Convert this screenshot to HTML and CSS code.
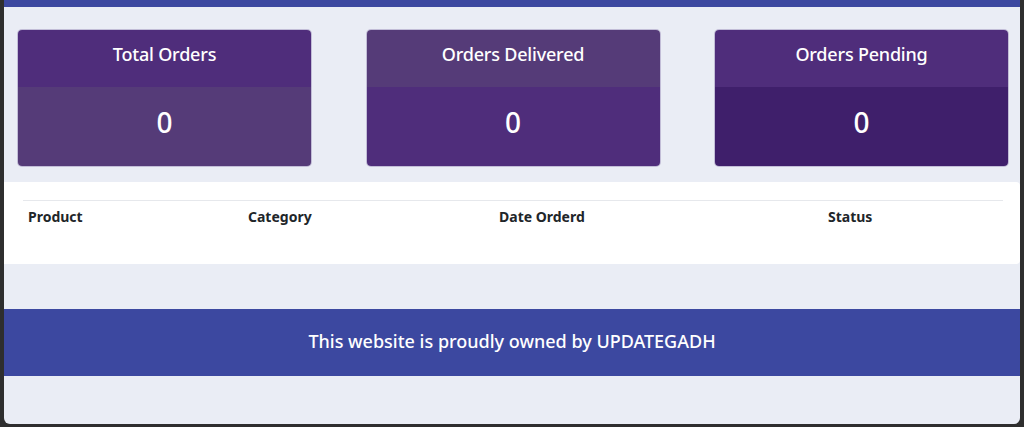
FILE: index.html
```html
<!DOCTYPE html>
<html lang="en">
<head>
    <meta charset="UTF-8">
    <meta name="viewport" content="width=device-width, initial-scale=1.0">
    <title>My Orders</title>
    <link rel="stylesheet" href="styles.css">
</head>
<body>
    <div class="page">
        <div class="navbar"></div>

        <!-- Resumen de pedidos -->
        <div class="cards">
            <div class="card card-total">
                <div class="card-header">Total Orders</div>
                <div class="card-body">0</div>
            </div>
            <div class="card card-delivered">
                <div class="card-header">Orders Delivered</div>
                <div class="card-body">0</div>
            </div>
            <div class="card card-pending">
                <div class="card-header">Orders Pending</div>
                <div class="card-body">0</div>
            </div>
        </div>

        <!-- Tabla de pedidos -->
        <div class="orders">
            <table class="orders-table">
                <thead>
                    <tr>
                        <th class="col-product">Product</th>
                        <th class="col-category">Category</th>
                        <th class="col-date">Date Orderd</th>
                        <th class="col-status">Status</th>
                    </tr>
                </thead>
                <tbody></tbody>
            </table>
        </div>

        <footer class="footer">This website is proudly owned by UPDATEGADH</footer>
    </div>
</body>
</html>
```

FILE: styles.css
```css
/* Estilo general */
body {
    margin: 0;
    padding: 0;
    background: #2e2e2e;
    font-family: "Noto Sans", "Open Sans", sans-serif;
}

.page {
    margin: 0 4px 0 4px;
    height: 424px;
    background: #eaedf5;
    border-radius: 0 0 6px 6px;
    overflow: hidden;
    display: flex;
    flex-direction: column;
}

.navbar {
    height: 7px;
    background: #3c48a0;
}

/* Tarjetas */
.cards {
    display: flex;
    justify-content: space-between;
    padding: 23px 12px 0 14px;
}

.card {
    width: 293px;
    height: 136px;
    border-radius: 4px;
    overflow: hidden;
    color: white;
    text-align: center;
    display: flex;
    flex-direction: column;
    box-shadow: 0 0 0 1px rgba(120, 100, 160, 0.35);
}

.card-header {
    height: 57px;
    box-sizing: border-box;
    padding-bottom: 10px;
    display: flex;
    align-items: center;
    justify-content: center;
    font-size: 18px;
    font-weight: 500;
    letter-spacing: -0.2px;
}

.card-body {
    flex: 1;
    padding-bottom: 9px;
    display: flex;
    align-items: center;
    justify-content: center;
    font-size: 28px;
    font-weight: 500;
}

.card-total .card-header { background: #4f2d7b; }
.card-total .card-body { background: #553b78; }
.card-delivered .card-header { background: #553b78; }
.card-delivered .card-body { background: #4f2d7b; }
.card-pending .card-header { background: #4f2d7b; }
.card-pending .card-body { background: #3f1f6b; }

/* Tabla */
.orders {
    margin-top: 16px;
    height: 82px;
    background: white;
    border-radius: 0 4px 4px 0;
    padding: 18px 17px 0 19px;
    box-sizing: border-box;
}

.orders-table {
    width: 100%;
    table-layout: fixed;
    border-collapse: collapse;
    border-top: 1px solid #e6e8ec;
}

.orders-table th {
    text-align: left;
    font-size: 14px;
    font-weight: 700;
    color: #212529;
    padding: 6px 5px 8px;
}

.col-product { width: 210px; }
.col-category { width: 241px; }
.col-date { width: 319px; }

/* Pie de página */
.footer {
    margin-top: 45px;
    height: 67px;
    box-sizing: border-box;
    padding-bottom: 4px;
    background: #3c48a0;
    color: white;
    font-size: 18px;
    font-weight: 500;
    display: flex;
    align-items: center;
    justify-content: center;
}
```
